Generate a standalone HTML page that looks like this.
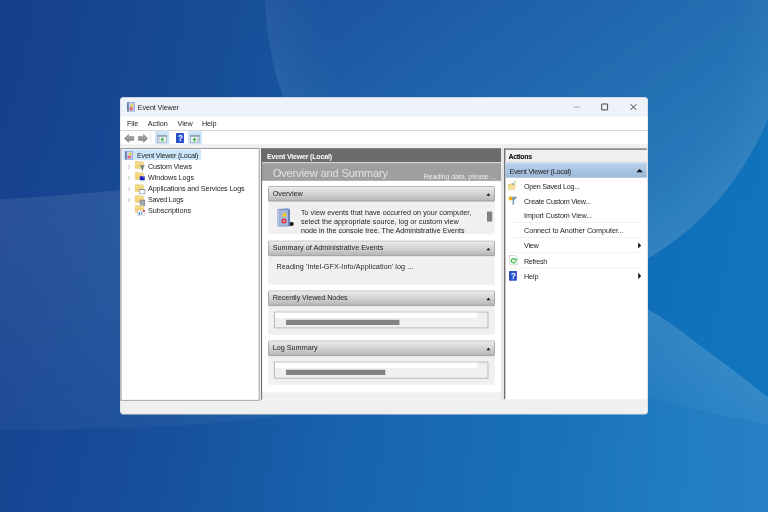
<!DOCTYPE html>
<html lang="en"><head><meta charset="utf-8"><title>Event Viewer</title>
<style>
html,body{margin:0;padding:0;width:768px;height:512px;overflow:hidden;background:#17509a}
body{position:relative;font-family:"Liberation Sans",sans-serif}
.a{position:absolute}
.t{position:absolute;white-space:pre;line-height:10px;height:10px;font-family:"Liberation Sans",sans-serif}
svg{position:absolute;overflow:visible}
.bar{position:absolute;left:268.2px;width:226.6px;height:15px;box-sizing:border-box;border:0.8px solid #9a9a9a;border-top-color:#b9b9b9;border-bottom-color:#888;border-radius:1px;background:linear-gradient(#ececec 0%,#dedede 25%,#cccccc 60%,#b3b3b3 100%)}
.grp{position:absolute;left:268.2px;width:226.6px;background:#f0f0f0}
.lst{position:absolute;left:274.2px;width:214.2px;box-sizing:border-box;border:0.8px solid #a9b1bb;background:#f0f0f0}
.sep{position:absolute;left:508.4px;width:134px;height:0.8px;background:#efefef}
.tri{position:absolute;width:0;height:0;border-left:1.9px solid transparent;border-right:1.9px solid transparent;border-bottom:2.3px solid #111}
</style></head><body>
<svg width="768" height="512" viewBox="0 0 768 512" style="left:0;top:0">
<defs>
<linearGradient id="bg" gradientUnits="userSpaceOnUse" x1="0" y1="0" x2="768" y2="150">
<stop offset="0" stop-color="#163f8d"/><stop offset="0.30" stop-color="#174f9a"/><stop offset="0.52" stop-color="#1761ab"/><stop offset="0.80" stop-color="#0d6bb4"/><stop offset="1" stop-color="#1074bd"/>
</linearGradient>
<linearGradient id="vg" gradientUnits="userSpaceOnUse" x1="0" y1="0" x2="0" y2="512">
<stop offset="0" stop-color="#000" stop-opacity="0.02"/><stop offset="0.5" stop-color="#000" stop-opacity="0"/><stop offset="1" stop-color="#000" stop-opacity="0.0"/>
</linearGradient>
<linearGradient id="eg" gradientUnits="userSpaceOnUse" x1="280" y1="-110" x2="580" y2="290">
<stop offset="0" stop-color="#184a97"/><stop offset="1" stop-color="#277cbc"/>
</linearGradient>
<radialGradient id="rim" gradientUnits="userSpaceOnUse" cx="0" cy="0" r="1" gradientTransform="translate(529.7,-13.9) scale(265,304.3)">
<stop offset="0.78" stop-color="#fff" stop-opacity="0"/><stop offset="0.88" stop-color="#fff" stop-opacity="0.018"/><stop offset="1" stop-color="#fff" stop-opacity="0.05"/>
</radialGradient>
<linearGradient id="bandl" gradientUnits="userSpaceOnUse" x1="0" y1="195" x2="0" y2="430">
<stop offset="0" stop-color="#fff" stop-opacity="0.085"/><stop offset="0.5" stop-color="#fff" stop-opacity="0.065"/><stop offset="1" stop-color="#fff" stop-opacity="0.035"/>
</linearGradient>
<linearGradient id="bandr" gradientUnits="userSpaceOnUse" x1="700" y1="345" x2="640" y2="425">
<stop offset="0" stop-color="#fff" stop-opacity="0.15"/><stop offset="1" stop-color="#fff" stop-opacity="0.075"/>
</linearGradient>
<linearGradient id="lowg" gradientUnits="userSpaceOnUse" x1="300" y1="0" x2="768" y2="0">
<stop offset="0" stop-color="#fff" stop-opacity="0"/><stop offset="1" stop-color="#fff" stop-opacity="0.09"/>
</linearGradient>
</defs>
<rect width="768" height="512" fill="url(#bg)"/>
<rect width="768" height="512" fill="url(#vg)"/>
<ellipse cx="529.7" cy="-13.9" rx="265" ry="304.3" fill="url(#eg)"/>
<ellipse cx="529.7" cy="-13.9" rx="265" ry="304.3" fill="url(#rim)"/>
<path d="M-20.0,201.0C-16.7,200.8 -8.3,200.1 0.0,199.5C8.3,198.9 18.3,198.3 30.0,197.5C41.7,196.7 56.7,195.6 70.0,194.5C83.3,193.4 100.8,191.8 110.0,191.0C119.2,190.2 122.5,189.8 125.0,189.5L300,180 L300,412.5L300.0,412.5C297.2,413.0 294.8,413.9 283.0,415.4C271.2,416.9 248.3,419.9 229.0,421.7C209.7,423.5 191.3,424.8 167.0,426.0C142.7,427.2 110.8,428.3 83.0,429.0C55.2,429.7 17.2,430.1 0.0,430.3C-17.2,430.5 -16.7,430.3 -20.0,430.3Z" fill="url(#bandl)"/>
<path d="M640.0,304.5C641.5,305.4 643.5,306.5 648.7,309.7C653.9,312.9 662.2,317.4 671.2,323.7C680.2,329.9 692.1,339.4 702.5,347.2C712.9,355.0 722.8,362.3 733.7,370.6C744.6,378.9 759.5,390.5 768.0,397.2C776.5,403.9 782.2,408.7 785.0,411.0L785.0,428.5C782.2,427.8 781.8,427.3 768.0,424.4C754.2,421.5 722.4,415.7 702.5,411.0C682.6,406.3 659.1,399.0 648.7,396.2C638.3,393.4 641.5,394.4 640.0,394.0Z" fill="url(#bandr)"/>
<path d="M300,412 L640,394 L640.0,394.0C641.5,394.4 638.3,393.4 648.7,396.2C659.1,399.0 682.6,406.3 702.5,411.0C722.4,415.7 754.2,421.5 768.0,424.4C781.8,427.3 782.2,427.8 785.0,428.5 L785,530 L300,530Z" fill="url(#lowg)"/>
</svg>
<svg width="768" height="512" viewBox="0 0 768 512" style="left:0;top:0">
<defs>
<linearGradient id="barg" x1="0" y1="0" x2="0" y2="1"><stop offset="0" stop-color="#ededed"/><stop offset="0.25" stop-color="#dfdfdf"/><stop offset="0.6" stop-color="#cdcdcd"/><stop offset="1" stop-color="#b4b4b4"/></linearGradient>
<linearGradient id="selg" x1="0" y1="0" x2="0" y2="1"><stop offset="0" stop-color="#bcd3ec"/><stop offset="0.5" stop-color="#a9c4e2"/><stop offset="1" stop-color="#9bb8d9"/></linearGradient>
<clipPath id="wclip"><rect x="120" y="97.25" width="528" height="317.2" rx="3.6"/></clipPath>
</defs>
<g clip-path="url(#wclip)">
<rect x="120" y="97" width="528" height="318" fill="#f0f0f0"/>
<rect x="120" y="97" width="528" height="19.6" fill="#eef3f9"/>
<rect x="120" y="116.6" width="528" height="27.5" fill="#ffffff"/>
<rect x="120" y="130" width="528" height="0.7" fill="#c6c6c6"/>
<rect x="513.1" y="401.2" width="0.6" height="12.8" fill="#dedede"/>
<rect x="513.7" y="401.2" width="0.6" height="12.8" fill="#fafafa"/>
<rect x="593.9" y="401.2" width="0.6" height="12.8" fill="#dedede"/>
<rect x="594.5" y="401.2" width="0.6" height="12.8" fill="#fafafa"/>
</g>
<rect x="120.2" y="97.45" width="527.6" height="316.8" rx="3.4" fill="none" stroke="#6f7c8f" stroke-opacity="0.35" stroke-width="0.5"/>
<rect x="150.5" y="132" width="0.7" height="11.6" fill="#d4d4d4"/>
<rect x="155.2" y="131.3" width="13.9" height="13.1" fill="#cce4f7"/>
<rect x="188.1" y="131.3" width="13.8" height="13.1" fill="#cce4f7"/>
<rect x="120.5" y="148.1" width="139.1" height="252.6" fill="#8f939b"/>
<rect x="121.5" y="149" width="137.2" height="250.9" fill="#ffffff"/>
<rect x="122.8" y="149.5" width="78.3" height="10.4" fill="#cce6fa"/>
<rect x="261" y="148.2" width="240" height="251.4" fill="#ffffff"/>
<rect x="261" y="148.2" width="240" height="14" fill="#6b6b6b"/>
<rect x="261" y="162.2" width="240" height="0.9" fill="#cfcfcf"/>
<rect x="261" y="163.1" width="240" height="17.7" fill="#9f9f9f"/>
<rect x="261" y="392.2" width="240" height="7.4" fill="#f0f0f0"/>
<rect x="261" y="148.2" width="1.1" height="251.4" fill="#707070"/>
<rect x="501" y="148.2" width="3" height="252" fill="#e6e6e6"/>
<rect x="268.2" y="201" width="226.6" height="33.2" fill="#f0f0f0"/>
<rect x="268.2" y="255" width="226.6" height="29.8" fill="#f0f0f0"/>
<rect x="268.2" y="305" width="226.6" height="29.8" fill="#f0f0f0"/>
<rect x="268.2" y="355" width="226.6" height="29.8" fill="#f0f0f0"/>
<rect x="268.5" y="186.6" width="226" height="14.5" rx="0.8" fill="url(#barg)" stroke="#8f8f8f" stroke-width="0.7"/>
<rect x="268.9" y="186.95" width="225.2" height="0.7" fill="#f6f6f6" fill-opacity="0.8"/>
<path d="M486.4,195.7 L488.4,193.3 L490.4,195.7Z" fill="#0c0c0c"/>
<rect x="268.5" y="241.2" width="226" height="14.5" rx="0.8" fill="url(#barg)" stroke="#8f8f8f" stroke-width="0.7"/>
<rect x="268.9" y="241.55" width="225.2" height="0.7" fill="#f6f6f6" fill-opacity="0.8"/>
<path d="M486.4,250.3 L488.4,247.9 L490.4,250.3Z" fill="#0c0c0c"/>
<rect x="268.5" y="291.1" width="226" height="14.5" rx="0.8" fill="url(#barg)" stroke="#8f8f8f" stroke-width="0.7"/>
<rect x="268.9" y="291.45" width="225.2" height="0.7" fill="#f6f6f6" fill-opacity="0.8"/>
<path d="M486.4,300.2 L488.4,297.8 L490.4,300.2Z" fill="#0c0c0c"/>
<rect x="268.5" y="341.1" width="226" height="14.5" rx="0.8" fill="url(#barg)" stroke="#8f8f8f" stroke-width="0.7"/>
<rect x="268.9" y="341.45" width="225.2" height="0.7" fill="#f6f6f6" fill-opacity="0.8"/>
<path d="M486.4,350.2 L488.4,347.8 L490.4,350.2Z" fill="#0c0c0c"/>
<rect x="487" y="211.6" width="5.2" height="10" fill="#808080"/>
<rect x="274.6" y="312.1" width="213.4" height="15.8" fill="#f0f0f0" stroke="#a7afb9" stroke-width="0.8"/>
<rect x="275.1" y="312.6" width="202.1" height="5.4" fill="#ffffff"/>
<rect x="286" y="319.8" width="113.4" height="5.2" fill="#838383"/>
<rect x="274.6" y="362.1" width="213.4" height="16.1" fill="#f0f0f0" stroke="#a7afb9" stroke-width="0.8"/>
<rect x="275.1" y="362.6" width="202.1" height="5.4" fill="#ffffff"/>
<rect x="286" y="369.8" width="99.3" height="5.2" fill="#838383"/>
<rect x="504" y="148.4" width="142.8" height="250.8" fill="#ffffff"/>
<rect x="504" y="148.4" width="142.8" height="13.8" fill="#f0f0f0"/>
<rect x="504" y="148.4" width="142.8" height="1.4" fill="#747474"/>
<rect x="504" y="148.4" width="1.4" height="250.8" fill="#747474"/>
<rect x="505.4" y="161.2" width="141.4" height="1.6" fill="#e2e2e2"/>
<rect x="505.4" y="162.8" width="141.4" height="14.9" fill="url(#selg)"/>
<path d="M636.3,172.3 L639.6,168.9 L642.9,172.3Z" fill="#0c0c0c"/>
<rect x="508.4" y="222.2" width="134" height="0.8" fill="#f1f1f1"/>
<rect x="508.4" y="237.2" width="134" height="0.8" fill="#f1f1f1"/>
<rect x="508.4" y="252.3" width="134" height="0.8" fill="#f1f1f1"/>
<rect x="508.4" y="267.6" width="134" height="0.8" fill="#f1f1f1"/>
<path d="M638.2,242.4 L641.2,245.5 L638.2,248.6Z" fill="#111"/>
<path d="M638.2,272.8 L641.2,275.9 L638.2,279Z" fill="#111"/>
<g fill="none" stroke="#262626" stroke-width="0.85"><path d="M573.6,107.1 H579.6" stroke="#9a9a9a"/><rect x="601.7" y="104.0" width="5.9" height="5.9" rx="0.3"/><path d="M630.5,104.2 L636.3,110 M636.3,104.2 L630.5,110"/></g>
</svg>
<svg width="8.2" height="9.8" viewBox="0 0 82 98" preserveAspectRatio="none" style="left:126.9px;top:102.0px">
<rect x="2" y="2" width="78" height="94" rx="5" fill="#7d97d2"/>
<rect x="2" y="2" width="14" height="94" rx="4" fill="#66749c"/>
<rect x="18" y="9" width="56" height="80" fill="#c3d1ee"/>
<path d="M52,14 L70,46 L34,46Z" fill="#f1d21c"/>
<circle cx="42" cy="68" r="17" fill="#e8636c"/>
</svg><svg width="8.2" height="8.7" viewBox="0 0 82 98" preserveAspectRatio="none" style="left:124.8px;top:151.0px">
<rect x="2" y="2" width="78" height="94" rx="5" fill="#7d97d2"/>
<rect x="2" y="2" width="14" height="94" rx="4" fill="#66749c"/>
<rect x="18" y="9" width="56" height="80" fill="#c3d1ee"/>
<path d="M52,14 L70,46 L34,46Z" fill="#f1d21c"/>
<circle cx="42" cy="68" r="17" fill="#e8636c"/>
</svg><svg width="10.4" height="11" viewBox="0 0 10.4 11" style="left:135.3px;top:161.40px">
<path d="M0.25,0.9 Q0.25,0.4 0.75,0.4 H3.6 L4.3,1.2 H8.2 Q8.7,1.2 8.7,1.7 V7 Q8.7,7.5 8.2,7.5 H0.75 Q0.25,7.5 0.25,7Z" fill="#f3d474" stroke="#dcbc60" stroke-width="0.4"/>
<rect x="4.9" y="0.3" width="3.4" height="1.5" fill="#e9dcae"/>
<rect x="0.2" y="2.2" width="8.4" height="0.5" fill="#f8e6a4"/>
<path d="M4.6,4.5 H10 L8,6.8 V9.2 L6.7,9.6 V6.8Z" fill="#58789a"/>
</svg><svg width="10.4" height="11" viewBox="0 0 10.4 11" style="left:135.3px;top:172.40px">
<path d="M0.25,0.9 Q0.25,0.4 0.75,0.4 H3.6 L4.3,1.2 H8.2 Q8.7,1.2 8.7,1.7 V7 Q8.7,7.5 8.2,7.5 H0.75 Q0.25,7.5 0.25,7Z" fill="#f3d474" stroke="#dcbc60" stroke-width="0.4"/>
<rect x="4.9" y="0.3" width="3.4" height="1.5" fill="#e9dcae"/>
<rect x="0.2" y="2.2" width="8.4" height="0.5" fill="#f8e6a4"/>
<rect x="4.8" y="4.3" width="5" height="3.9" fill="#1420c4"/><path d="M7.6,4.5 h2 v2.2Z" fill="#8fa0ee"/><rect x="5.8" y="8.5" width="3" height="0.8" fill="#a8a8a8"/>
</svg><svg width="10.4" height="11" viewBox="0 0 10.4 11" style="left:135.3px;top:183.50px">
<path d="M0.25,0.9 Q0.25,0.4 0.75,0.4 H3.6 L4.3,1.2 H8.2 Q8.7,1.2 8.7,1.7 V7 Q8.7,7.5 8.2,7.5 H0.75 Q0.25,7.5 0.25,7Z" fill="#f3d474" stroke="#dcbc60" stroke-width="0.4"/>
<rect x="4.9" y="0.3" width="3.4" height="1.5" fill="#e9dcae"/>
<rect x="0.2" y="2.2" width="8.4" height="0.5" fill="#f8e6a4"/>
<rect x="4.3" y="5.4" width="5.6" height="4.3" fill="#fff" stroke="#8a93ab" stroke-width="0.7"/><rect x="4.3" y="5.2" width="5.6" height="1" fill="#8a93ab"/>
</svg><svg width="10.4" height="11" viewBox="0 0 10.4 11" style="left:135.3px;top:194.50px">
<path d="M0.25,0.9 Q0.25,0.4 0.75,0.4 H3.6 L4.3,1.2 H8.2 Q8.7,1.2 8.7,1.7 V7 Q8.7,7.5 8.2,7.5 H0.75 Q0.25,7.5 0.25,7Z" fill="#f3d474" stroke="#dcbc60" stroke-width="0.4"/>
<rect x="4.9" y="0.3" width="3.4" height="1.5" fill="#e9dcae"/>
<rect x="0.2" y="2.2" width="8.4" height="0.5" fill="#f8e6a4"/>
<rect x="5.1" y="5.1" width="4.7" height="5.4" fill="#a3abab" stroke="#6c7896" stroke-width="0.6"/>
</svg><svg width="10.4" height="11" viewBox="0 0 10.4 11" style="left:135.3px;top:205.40px">
<path d="M0.25,0.9 Q0.25,0.4 0.75,0.4 H3.6 L4.3,1.2 H8.2 Q8.7,1.2 8.7,1.7 V7 Q8.7,7.5 8.2,7.5 H0.75 Q0.25,7.5 0.25,7Z" fill="#f3d474" stroke="#dcbc60" stroke-width="0.4"/>
<rect x="4.9" y="0.3" width="3.4" height="1.5" fill="#e9dcae"/>
<rect x="0.2" y="2.2" width="8.4" height="0.5" fill="#f8e6a4"/>
<rect x="2.5" y="5.2" width="7.4" height="5.4" fill="#fbfbfb" stroke="#c2c6d0" stroke-width="0.5"/><rect x="3.6" y="7.2" width="1.2" height="2.8" fill="#2a86d8"/><rect x="6.2" y="6.6" width="1" height="3.4" fill="#58a6e6"/><rect x="7.9" y="5" width="2" height="1.9" fill="#e24456"/>
</svg><svg width="4" height="6" viewBox="0 0 4 6" style="left:127.0px;top:164.20px"><path d="M0.8,0.8 L3,3 L0.8,5.2" fill="none" stroke="#a6a6a6" stroke-width="0.7"/></svg><svg width="4" height="6" viewBox="0 0 4 6" style="left:127.0px;top:175.20px"><path d="M0.8,0.8 L3,3 L0.8,5.2" fill="none" stroke="#a6a6a6" stroke-width="0.7"/></svg><svg width="4" height="6" viewBox="0 0 4 6" style="left:127.0px;top:186.30px"><path d="M0.8,0.8 L3,3 L0.8,5.2" fill="none" stroke="#a6a6a6" stroke-width="0.7"/></svg><svg width="4" height="6" viewBox="0 0 4 6" style="left:127.0px;top:197.30px"><path d="M0.8,0.8 L3,3 L0.8,5.2" fill="none" stroke="#a6a6a6" stroke-width="0.7"/></svg><svg width="10.2" height="8.8" viewBox="0 0 10.2 8.8" style="left:123.8px;top:133.9px"><path d="M0.4,4.4 L4.7,0.4 V2.4 H9.8 V6.4 H4.7 V8.4Z" fill="#919191" stroke="#7e7e7e" stroke-width="0.5" stroke-linejoin="round"/><path d="M2.4,4.2 L4.2,2.6 V3.4 H8.8 V4.3 H3Z" fill="#b4b4b4"/></svg><svg width="10.2" height="8.8" viewBox="0 0 10.2 8.8" style="left:137.8px;top:133.9px"><path d="M0.4,4.4 L4.7,0.4 V2.4 H9.8 V6.4 H4.7 V8.4Z" transform="translate(10.2,0) scale(-1,1)" fill="#919191" stroke="#7e7e7e" stroke-width="0.5" stroke-linejoin="round"/><path d="M2.4,4.2 L4.2,2.6 V3.4 H8.8 V4.3 H3Z" transform="translate(10.2,0) scale(-1,1)" fill="#b4b4b4"/></svg><svg width="9.8" height="7.4" viewBox="0 0 9.8 7.4" style="left:157.3px;top:135.3px">
<rect x="0.3" y="0.3" width="9.2" height="6.8" fill="#f1f4f7" stroke="#8893a3" stroke-width="0.6"/>
<rect x="0.3" y="0.3" width="9.2" height="1.5" fill="#8f9bad"/>
<rect x="0.9" y="2.4" width="2.2" height="4.2" fill="#c9d3de"/><path d="M6.6,3.2 v2.6 h-1.2 v0.9 l-1.6,-2.2 l1.6,-2.2 v0.9Z" fill="#2fb43a"/></svg><svg width="9.8" height="7.4" viewBox="0 0 9.8 7.4" style="left:190.2px;top:135.3px">
<rect x="0.3" y="0.3" width="9.2" height="6.8" fill="#f1f4f7" stroke="#8893a3" stroke-width="0.6"/>
<rect x="0.3" y="0.3" width="9.2" height="1.5" fill="#8f9bad"/>
<rect x="6.7" y="2.4" width="2.2" height="4.2" fill="#c9d3de"/><path d="M3.2,3.2 v2.6 h1.2 v0.9 l1.6,-2.2 l-1.6,-2.2 v0.9Z" fill="#2fb43a"/></svg><svg width="8.1" height="10.1" viewBox="0 0 80 100" preserveAspectRatio="none" style="left:176.2px;top:133.0px">
<defs><linearGradient id="hg176" x1="0" y1="0" x2="1" y2="0"><stop offset="0" stop-color="#1a37a6"/><stop offset="0.35" stop-color="#2f59dc"/><stop offset="1" stop-color="#2a4ccc"/></linearGradient></defs>
<rect x="1" y="1" width="78" height="98" rx="6" fill="url(#hg176)"/>
<text x="44" y="80" font-family="Liberation Sans, sans-serif" font-weight="700" font-size="84" text-anchor="middle" fill="#eef2ff">?</text>
</svg><svg width="17" height="19.5" viewBox="0 0 170 195" style="left:277px;top:207.6px">
<ellipse cx="147" cy="160" rx="20" ry="19" fill="#151515"/>
<rect x="124" y="146" width="24" height="30" fill="#151515"/>
<path d="M8,10 L110,3 Q128,4 128,20 V172 Q128,186 112,186 H14 Q4,186 4,176 V18 Q4,10 8,10Z" fill="#7e93c6"/>
<rect x="4" y="14" width="20" height="168" fill="#bcc8e6"/>
<rect x="27" y="22" width="92" height="155" fill="#a4b6de"/>
<rect x="112" y="20" width="16" height="160" fill="#6278ae"/>
<path d="M74,38 L101,86 L47,86Z" fill="#efd21a"/>
<circle cx="69" cy="130" r="25" fill="#d8303c"/>
<circle cx="69" cy="130" r="9" fill="#f4c8cc"/>
</svg><svg width="10" height="10" viewBox="0 0 10 10" style="left:507.4px;top:181.2px">
<rect x="6.6" y="0.4" width="2.8" height="1.2" fill="#92ea82"/>
<path d="M0.9,3.4 Q0.9,2.8 1.5,2.8 H3.6 L4.3,2.2 H7.6 Q8.2,2.2 8.2,2.8 V4 H8.8 L7.6,9 H0.9Z" fill="#ecd58a"/>
<path d="M0.9,9 L2.2,4.6 H9 L7.6,9Z" fill="#f3e0a0"/>
<circle cx="6" cy="3" r="0.8" fill="#3a8ed0"/>
</svg><svg width="10" height="10" viewBox="0 0 10 10" style="left:508.4px;top:195.6px">
<path d="M0.7,0.8 H9.3 L6.1,4.6 V8.2 L4.6,9.2 V4.6Z" fill="#7b9bb9"/>
<circle cx="2.6" cy="2.5" r="1.9" fill="#f8ae10"/>
</svg><svg width="9" height="10.4" viewBox="0 0 9 10.4" style="left:508.7px;top:255.4px">
<path d="M0.5,0.5 H6 L8.4,2.9 V9.9 H0.5Z" fill="#fbfbfb" stroke="#c2c2c2" stroke-width="0.6"/>
<path d="M6.3,4.4 A2.2,2.2 0 1 0 6.6,6.6" fill="none" stroke="#35c03c" stroke-width="1.2"/>
<path d="M5.2,5.5 L7.9,5.7 L7.3,3.2Z" fill="#2bb034"/>
</svg><svg width="8.0" height="9.8" viewBox="0 0 80 100" preserveAspectRatio="none" style="left:508.9px;top:270.7px">
<defs><linearGradient id="hg508" x1="0" y1="0" x2="1" y2="0"><stop offset="0" stop-color="#1a37a6"/><stop offset="0.35" stop-color="#2f59dc"/><stop offset="1" stop-color="#2a4ccc"/></linearGradient></defs>
<rect x="1" y="1" width="78" height="98" rx="6" fill="url(#hg508)"/>
<text x="44" y="80" font-family="Liberation Sans, sans-serif" font-weight="700" font-size="84" text-anchor="middle" fill="#eef2ff">?</text>
</svg><div id="txt" style="position:absolute;left:0;top:0;width:768px;height:512px;will-change:transform">
<div class="t" style="left:137.80px;top:103.10px;font-size:7.2px;font-weight:400;color:#242424;letter-spacing:-0.093px">Event Viewer</div>
<div class="t" style="left:127.00px;top:119.00px;font-size:7.2px;font-weight:400;color:#242424;letter-spacing:-0.131px">File</div>
<div class="t" style="left:147.80px;top:119.00px;font-size:7.2px;font-weight:400;color:#242424;letter-spacing:0.003px">Action</div>
<div class="t" style="left:177.60px;top:119.00px;font-size:7.2px;font-weight:400;color:#242424;letter-spacing:-0.118px">View</div>
<div class="t" style="left:202.00px;top:119.00px;font-size:7.2px;font-weight:400;color:#242424;letter-spacing:-0.066px">Help</div>
<div class="t" style="left:137.00px;top:151.20px;font-size:7.2px;font-weight:400;color:#242424;letter-spacing:-0.252px">Event Viewer (Local)</div>
<div class="t" style="left:148.00px;top:162.10px;font-size:7.2px;font-weight:400;color:#242424;letter-spacing:-0.165px">Custom Views</div>
<div class="t" style="left:148.00px;top:173.10px;font-size:7.2px;font-weight:400;color:#242424;letter-spacing:-0.068px">Windows Logs</div>
<div class="t" style="left:148.00px;top:184.20px;font-size:7.2px;font-weight:400;color:#242424;letter-spacing:-0.110px">Applications and Services Logs</div>
<div class="t" style="left:148.00px;top:195.20px;font-size:7.2px;font-weight:400;color:#242424;letter-spacing:-0.252px">Saved Logs</div>
<div class="t" style="left:148.00px;top:206.10px;font-size:7.2px;font-weight:400;color:#242424;letter-spacing:-0.013px">Subscriptions</div>
<div class="t" style="left:267.00px;top:152.10px;font-size:7.0px;font-weight:700;color:#ffffff;letter-spacing:-0.176px">Event Viewer (Local)</div>
<div class="t" style="left:272.70px;top:167.70px;font-size:11.2px;font-weight:400;color:#e2e2e2;letter-spacing:-0.214px">Overview and Summary</div>
<div class="t" style="left:423.50px;top:171.80px;font-size:7.2px;font-weight:400;color:#ececec;letter-spacing:-0.136px">Reading data, please ...</div>
<div class="t" style="left:272.70px;top:189.10px;font-size:7.2px;font-weight:400;color:#242424;letter-spacing:0.004px">Overview</div>
<div class="t" style="left:300.90px;top:208.00px;font-size:7.2px;font-weight:400;color:#242424;letter-spacing:0.044px">To view events that have occurred on your computer,</div>
<div class="t" style="left:300.90px;top:217.30px;font-size:7.2px;font-weight:400;color:#242424;letter-spacing:0.033px">select the appropriate source, log or custom view</div>
<div class="t" style="left:300.90px;top:226.30px;font-size:7.2px;font-weight:400;color:#242424;letter-spacing:0.002px">node in the console tree. The Administrative Events</div>
<div class="t" style="left:272.70px;top:243.10px;font-size:7.2px;font-weight:400;color:#242424;letter-spacing:0.040px">Summary of Administrative Events</div>
<div class="t" style="left:276.50px;top:261.80px;font-size:7.2px;font-weight:400;color:#242424;letter-spacing:0.082px">Reading &#x27;Intel-GFX-Info/Application&#x27; log ...</div>
<div class="t" style="left:272.70px;top:293.10px;font-size:7.2px;font-weight:400;color:#242424;letter-spacing:-0.059px">Recently Viewed Nodes</div>
<div class="t" style="left:272.70px;top:343.40px;font-size:7.2px;font-weight:400;color:#242424;letter-spacing:0.025px">Log Summary</div>
<div class="t" style="left:508.40px;top:152.40px;font-size:7.0px;font-weight:700;color:#000000;letter-spacing:-0.312px">Actions</div>
<div class="t" style="left:509.40px;top:167.00px;font-size:7.2px;font-weight:400;color:#242424;letter-spacing:-0.231px">Event Viewer (Local)</div>
<div class="t" style="left:524.00px;top:181.80px;font-size:7.2px;font-weight:400;color:#242424;letter-spacing:-0.266px">Open Saved Log...</div>
<div class="t" style="left:524.00px;top:196.60px;font-size:7.2px;font-weight:400;color:#242424;letter-spacing:-0.219px">Create Custom View...</div>
<div class="t" style="left:524.00px;top:210.80px;font-size:7.2px;font-weight:400;color:#242424;letter-spacing:-0.109px">Import Custom View...</div>
<div class="t" style="left:524.00px;top:226.30px;font-size:7.2px;font-weight:400;color:#242424;letter-spacing:-0.031px">Connect to Another Computer...</div>
<div class="t" style="left:524.00px;top:241.30px;font-size:7.2px;font-weight:400;color:#242424;letter-spacing:-0.218px">View</div>
<div class="t" style="left:524.00px;top:256.70px;font-size:7.2px;font-weight:400;color:#242424;letter-spacing:-0.329px">Refresh</div>
<div class="t" style="left:524.00px;top:271.70px;font-size:7.2px;font-weight:400;color:#242424;letter-spacing:-0.099px">Help</div>
</div>
</body></html>
